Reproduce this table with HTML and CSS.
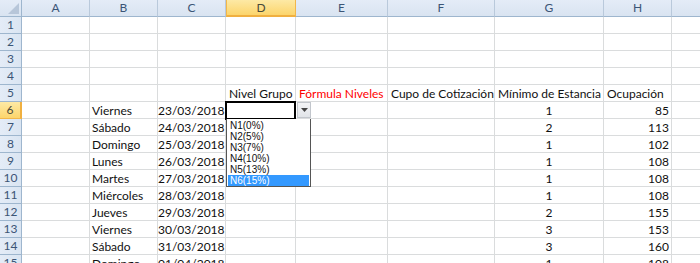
FILE: index.html
```html
<!DOCTYPE html>
<html lang="es">
<head>
<meta charset="utf-8">
<title>Hoja</title>
<link rel="stylesheet" href="styles.css">
</head>
<body>
<div class="sheet">
  <div class="grid">
    <div class="ch corner"><span class="tri"></span></div>
    <div class="ch">A</div><div class="ch">B</div><div class="ch">C</div><div class="ch hl">D</div><div class="ch">E</div><div class="ch">F</div><div class="ch">G</div><div class="ch">H</div><div class="ch last"></div>

    <div class="rh">1</div><div class="c"></div><div class="c"></div><div class="c"></div><div class="c"></div><div class="c"></div><div class="c"></div><div class="c"></div><div class="c"></div><div class="c"></div>
    <div class="rh">2</div><div class="c"></div><div class="c"></div><div class="c"></div><div class="c"></div><div class="c"></div><div class="c"></div><div class="c"></div><div class="c"></div><div class="c"></div>
    <div class="rh">3</div><div class="c"></div><div class="c"></div><div class="c"></div><div class="c"></div><div class="c"></div><div class="c"></div><div class="c"></div><div class="c"></div><div class="c"></div>
    <div class="rh">4</div><div class="c"></div><div class="c"></div><div class="c"></div><div class="c"></div><div class="c"></div><div class="c"></div><div class="c"></div><div class="c"></div><div class="c"></div>
    <div class="rh">5</div><div class="c"></div><div class="c"></div><div class="c"></div><div class="c l hd">Nivel Grupo</div><div class="c l hd red">Fórmula Niveles</div><div class="c l hd">Cupo de Cotización</div><div class="c l hd">Mínimo de Estancia</div><div class="c l hd">Ocupación</div><div class="c"></div>
    <div class="rh hl">6</div><div class="c"></div><div class="c l">Viernes</div><div class="c r">23/03/2018</div><div class="c"></div><div class="c"></div><div class="c"></div><div class="c m">1</div><div class="c r">85</div><div class="c"></div>
    <div class="rh">7</div><div class="c"></div><div class="c l">Sábado</div><div class="c r">24/03/2018</div><div class="c"></div><div class="c"></div><div class="c"></div><div class="c m">2</div><div class="c r">113</div><div class="c"></div>
    <div class="rh">8</div><div class="c"></div><div class="c l">Domingo</div><div class="c r">25/03/2018</div><div class="c"></div><div class="c"></div><div class="c"></div><div class="c m">1</div><div class="c r">102</div><div class="c"></div>
    <div class="rh">9</div><div class="c"></div><div class="c l">Lunes</div><div class="c r">26/03/2018</div><div class="c"></div><div class="c"></div><div class="c"></div><div class="c m">1</div><div class="c r">108</div><div class="c"></div>
    <div class="rh">10</div><div class="c"></div><div class="c l">Martes</div><div class="c r">27/03/2018</div><div class="c"></div><div class="c"></div><div class="c"></div><div class="c m">1</div><div class="c r">108</div><div class="c"></div>
    <div class="rh">11</div><div class="c"></div><div class="c l">Miércoles</div><div class="c r">28/03/2018</div><div class="c"></div><div class="c"></div><div class="c"></div><div class="c m">1</div><div class="c r">108</div><div class="c"></div>
    <div class="rh">12</div><div class="c"></div><div class="c l">Jueves</div><div class="c r">29/03/2018</div><div class="c"></div><div class="c"></div><div class="c"></div><div class="c m">2</div><div class="c r">155</div><div class="c"></div>
    <div class="rh">13</div><div class="c"></div><div class="c l">Viernes</div><div class="c r">30/03/2018</div><div class="c"></div><div class="c"></div><div class="c"></div><div class="c m">3</div><div class="c r">153</div><div class="c"></div>
    <div class="rh">14</div><div class="c"></div><div class="c l">Sábado</div><div class="c r">31/03/2018</div><div class="c"></div><div class="c"></div><div class="c"></div><div class="c m">3</div><div class="c r">160</div><div class="c"></div>
    <div class="rh">15</div><div class="c"></div><div class="c l">Domingo</div><div class="c r">01/04/2018</div><div class="c"></div><div class="c"></div><div class="c"></div><div class="c m">1</div><div class="c r">108</div><div class="c"></div>
  </div>

  <div class="active-cell"></div>
  <div class="dd-btn"><svg width="7" height="4" viewBox="0 0 7 4"><path d="M0 0h7L3.5 4z" fill="#444"/></svg></div>
  <ul class="dd-list">
    <li>N1(0%)</li>
    <li>N2(5%)</li>
    <li>N3(7%)</li>
    <li>N4(10%)</li>
    <li>N5(13%)</li>
    <li class="on">N6(15%)</li>
  </ul>
</div>
</body>
</html>
```
FILE: styles.css
```css
* { box-sizing: border-box; }
html, body { margin: 0; padding: 0; background: #fff; }
body { width: 700px; height: 263px; overflow: hidden; }

.sheet {
  position: relative;
  width: 700px;
  height: 263px;
  overflow: hidden;
  font-family: Lato, "Open Sans", sans-serif;
  font-size: 12px;
  color: #111;
}

.grid {
  display: grid;
  grid-template-columns: 22px 68px 68px 68px 70px 92px 107px 109px 68px 60px;
  grid-template-rows: 17px;
  grid-auto-rows: 17px;
}

.c {
  border-right: 1px solid #dadcdd;
  border-bottom: 1px solid #dadcdd;
  white-space: nowrap;
  line-height: 16px;
  padding-top: 1px;
  overflow: visible;
}
.l { text-align: left; padding-left: 2px; }
.hd { padding-left: 3px; }
.r { text-align: right; padding-right: 2px; }
.m { text-align: center; }
.red { color: #ff0000; }

.ch {
  background: linear-gradient(#e4ecf7, #d9e4f1);
  border-right: 1px solid #b9c9db;
  border-bottom: 1px solid #9eb6ce;
  color: #3b5576;
  text-align: center;
  line-height: 16px;
  font-size: 12px;
}
.ch.last { border-right: none; }
.corner { position: relative; border-right: 1px solid #9eb6ce; }
.tri {
  position: absolute;
  right: 2px;
  bottom: 2px;
  width: 0;
  height: 0;
  border-left: 11px solid transparent;
  border-bottom: 11px solid #b7c6d9;
}

.rh {
  background: linear-gradient(90deg, #e4ecf7, #dae5f2);
  border-right: 1px solid #9eb6ce;
  border-bottom: 1px solid #9eb6ce;
  color: #3b5576;
  text-align: center;
  line-height: 16px;
  font-size: 12px;
}

.ch.hl, .rh.hl {
  background: linear-gradient(#fde9a5, #fcd56c);
  border-color: #f2b74a;
  color: #4a4a3a;
}
.ch.hl { border-left: 1px solid #f2b74a; border-bottom: 2px solid #f0b040; }
.rh.hl { border-right: 2px solid #f0b040; }

.active-cell {
  position: absolute;
  left: 225px;
  top: 101px;
  width: 71px;
  height: 19px;
  border: 2px solid #000;
  background: #fff;
}

.dd-btn {
  position: absolute;
  left: 297px;
  top: 102px;
  width: 14px;
  height: 16px;
  background: linear-gradient(#f3f4f6, #e1e4e8);
  border: 1px solid #c2c6cc;
  display: flex;
  align-items: center;
  justify-content: center;
}

.dd-list {
  position: absolute;
  left: 226px;
  top: 119px;
  width: 85px;
  height: 68px;
  margin: 0;
  padding: 1px 1px 0 1px;
  list-style: none;
  background: #fff;
  border: 1px solid #555;
  border-top: none;
  font-family: "Liberation Sans", Arial, sans-serif;
  font-size: 10px;
  color: #111;
}
.dd-list li {
  height: 11px;
  line-height: 11px;
  padding-left: 2px;
  white-space: nowrap;
}
.dd-list li.on {
  background: #3399ff;
  color: #fff;
}
```
